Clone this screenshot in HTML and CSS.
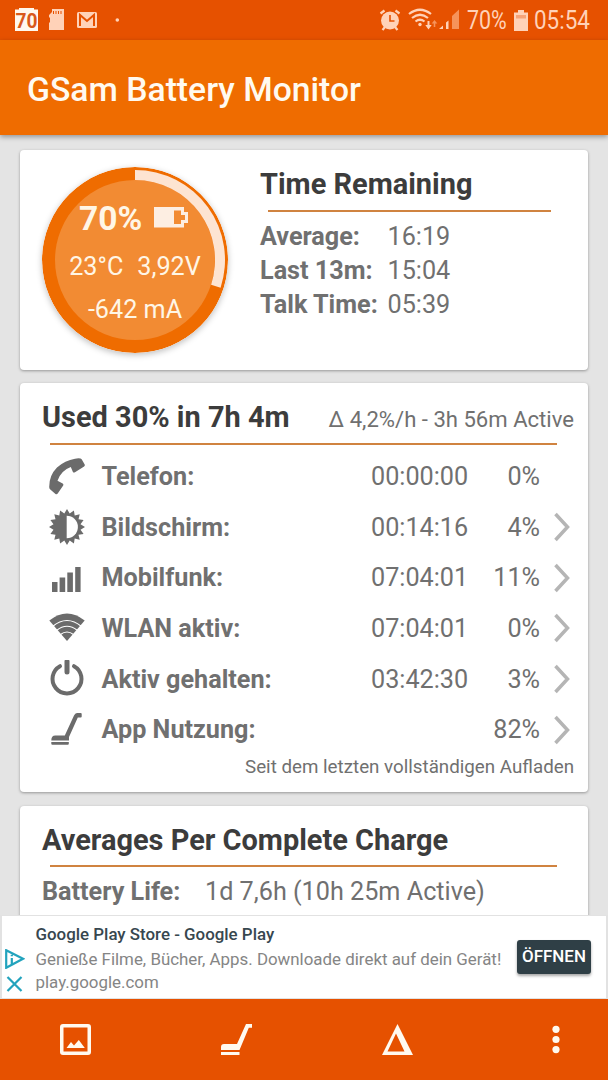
FILE: index.html
```html
<!DOCTYPE html>
<html lang="de">
<head>
  <meta charset="UTF-8">
  <meta name="viewport" content="width=device-width, initial-scale=1.0">
  <title>GSam Battery Monitor</title>
  <link rel="stylesheet" href="styles.css">
</head>
<body>
  <div class="status-bar">
    <svg class="status-left" width="130" height="40" viewBox="0 0 130 40">
      <path fill="#fff8ee" d="M19 8h15v1.500h4V31H15V9.500h4z"/>
      <text class="status-level" x="15.500" y="27.600" textLength="22" lengthAdjust="spacingAndGlyphs">70</text>
      <path fill="#ffd2b8" d="M52 9h12v21H49v-7l1-1v-4l-1-1v-2l3-3z"/>
      <path stroke="#e65100" stroke-width="1" d="M53.500 11v3M56 11v3M58.500 11v3M61 11v3"/>
      <rect x="77" y="12" width="20" height="16" rx="1.500" fill="#ffd2b8"/>
      <path fill="none" stroke="#e65100" stroke-width="2" d="M80 26V15l7 6 7-6v11"/>
      <circle cx="117.300" cy="20" r="1.800" fill="#ffd2b8"/>
    </svg>
    <svg class="status-right" width="82" height="40" viewBox="0 0 82 40">
      <circle cx="12" cy="20.500" r="9" fill="#ffd2b8"/>
      <path fill="none" stroke="#ffd2b8" stroke-width="2.200" d="M2.500 13.500l4-3M21.500 13.500l-4-3M7 27l-2.500 3M17 27l2.500 3"/>
      <path fill="none" stroke="#e65100" stroke-width="1.600" d="M12 15v6h4.500"/>
      <g fill="none" stroke="#ffd2b8" stroke-width="2.200">
        <path d="M31 14q11-8.500 22 0"/>
        <path d="M34 18q8-6.500 16 0"/>
        <path d="M37.500 21.500q4.500-3.500 9 0"/>
      </g>
      <circle cx="42" cy="24.500" r="1.700" fill="#ffd2b8"/>
      <path fill="#ffd2b8" d="M49.500 21h2v4h2.200l-3.200 4.500-3.200-4.500h2.200z"/>
      <path fill="#f6935a" d="M56.500 20l2.800 3.500h-2V27h-1.600v-3.500h-2z"/>
      <path fill="#ffd2b8" d="M61 29l4-3.500V29zM68 22.500l2.500-2V29H68z"/>
      <path fill="#f6935a" d="M74 16l7-6.500V29h-7z"/>
    </svg>
    <span class="status-percent">70%</span>
    <svg class="status-battery" width="14" height="21" viewBox="0 0 14 21">
      <path fill="#ffd2b8" d="M4 0h6v2.500h4V21H0V2.500h4z"/>
      <path fill="#f6a478" d="M2 5h10v3.500H2z"/>
    </svg>
    <span class="status-time">05:54</span>
  </div>

  <header class="app-bar">
    <h1>GSam Battery Monitor</h1>
  </header>

  <main class="content">
    <section class="card remaining">
      <div class="gauge">
        <svg class="gauge-ring" width="186" height="186" viewBox="-93 -93 186 186">
          <circle r="93" fill="#ef6c00"/>
          <circle r="80" fill="#f28b33"/>
          <path fill="#fde4d2" d="M0-90A90 90 0 0 1 85.600 27.800L76.100 24.700A80 80 0 0 0 0-80z"/>
        </svg>
        <div class="gauge-text">
          <div class="gauge-level">
            <b>70%</b>
            <svg width="35" height="22" viewBox="0 0 35 22">
              <path fill="#fdeee2" fill-rule="evenodd" d="M0 0h30v5h4v11h-4v4.500H0zM20 3.500V17h7v-4h4V8h-4V3.500z"/>
            </svg>
          </div>
          <div class="gauge-line"><span>23°C</span><span>3,92V</span></div>
          <div class="gauge-line">-642 mA</div>
        </div>
      </div>
      <div class="times">
        <h2>Time Remaining</h2>
        <hr>
        <dl>
          <dt>Average:</dt><dd>16:19</dd>
          <dt>Last 13m:</dt><dd>15:04</dd>
          <dt>Talk Time:</dt><dd>05:39</dd>
        </dl>
      </div>
    </section>

    <section class="card usage">
      <div class="card-head">
        <h2>Used 30% in 7h 4m</h2>
        <span>Δ 4,2%/h - 3h 56m Active</span>
      </div>
      <hr>
      <div class="row">
        <svg class="icon" viewBox="0 0 38 38"><path d="M27 .8Q30 0 32.500.5q1 .3 1.600 1.400l2.600 4.600q.6 1.200-.6 2L27 14.200q-1.500.9-2.200-.5l-2-4.700Q13 12.500 9.500 22.800l5.200 2.700q1.200.8.5 2L9.700 35.500q-.9 1.300-2.200.5L2.300 31.500Q1.200 30.500 1.200 29 1 17.500 9 9.500 17 2.500 27 .8z"/></svg>
        <b>Telefon:</b><span class="time">00:00:00</span><span class="percent">0%</span>
      </div>
      <div class="row">
        <svg class="icon" viewBox="-19 -19 38 38">
          <path d="M0-18L2.700-13.500 6.900-16.600 7.700-11.500 12.700-12.700 11.500-7.700 16.600-6.900 13.500-2.700 18 0 13.500 2.700 16.600 6.900 11.500 7.700 12.700 12.700 7.700 11.500 6.900 16.600 2.700 13.500 0 18-2.700 13.500-6.900 16.600-7.700 11.500-12.700 12.700-11.500 7.700-16.600 6.900-13.500 2.700-18 0-13.500-2.700-16.600-6.900-11.500-7.700-12.700-12.700-7.700-11.500-6.900-16.600-2.700-13.500z"/>
          <path fill="#fff" d="M-.3-11.200a11.200 11.200 0 0 1 0 22.400z"/>
        </svg>
        <b>Bildschirm:</b><span class="time">00:14:16</span><span class="percent">4%</span>
        <svg class="chevron" viewBox="0 0 16 30"><path d="M1.500 2l12 13-12 13"/></svg>
      </div>
      <div class="row">
        <svg class="icon" viewBox="0 0 38 38"><path d="M4 23h5.500v10H4zM11.600 18.500h5.600V33h-5.600zM19.300 13.500h5.600V33h-5.600zM27.200 8h5.400v25h-5.400z"/></svg>
        <b>Mobilfunk:</b><span class="time">07:04:01</span><span class="percent">11%</span>
        <svg class="chevron" viewBox="0 0 16 30"><path d="M1.500 2l12 13-12 13"/></svg>
      </div>
      <div class="row">
        <svg class="icon" viewBox="0 0 38 38">
          <path d="M19 32L1.300 11.500Q19-2.500 36.700 11.500z"/>
          <path class="gap" d="M4.500 17.500q14.500-12 29 0M8.500 21.500q10.500-8.500 21 0M12.500 25.500q6.500-5 13 0"/>
        </svg>
        <b>WLAN aktiv:</b><span class="time">07:04:01</span><span class="percent">0%</span>
        <svg class="chevron" viewBox="0 0 16 30"><path d="M1.500 2l12 13-12 13"/></svg>
      </div>
      <div class="row">
        <svg class="icon" viewBox="0 0 38 38"><path class="line" d="M12 6.200a14.500 14.500 0 1 0 14 0"/><path class="line thick" d="M19 1.500v10.500"/></svg>
        <b>Aktiv gehalten:</b><span class="time">03:42:30</span><span class="percent">3%</span>
        <svg class="chevron" viewBox="0 0 16 30"><path d="M1.500 2l12 13-12 13"/></svg>
      </div>
      <div class="row">
        <svg class="icon" viewBox="0 0 38 38"><path d="M33.700 3v2.500q0 1-1 1h-2.900L21 26v3.500H3.300q0-5 4-5h9.500L26 4.500Q27 2 29 2h3.700q1 0 1 1zM3.300 31h17.500v1.700q0 1-1 1H4.300q-1 0-1-1z"/></svg>
        <b>App Nutzung:</b><span class="time"></span><span class="percent">82%</span>
        <svg class="chevron" viewBox="0 0 16 30"><path d="M1.500 2l12 13-12 13"/></svg>
      </div>
      <p class="note">Seit dem letzten vollständigen Aufladen</p>
    </section>

    <section class="card averages">
      <h2>Averages Per Complete Charge</h2>
      <hr>
      <dl>
        <dt>Battery Life:</dt><dd>1d 7,6h (10h 25m Active)</dd>
      </dl>
    </section>
  </main>

  <aside class="ad">
    <div class="ad-marks">
      <svg width="20" height="20" viewBox="0 0 20 20"><path d="M1.200 1.200L18 9.800 1.200 18.800zM6.800 9v6M6.800 5.800v1.500"/></svg>
      <svg width="20" height="20" viewBox="0 0 20 20"><path d="M2.500 3l14 14M16.500 3l-14 14"/></svg>
    </div>
    <div class="ad-text">
      <strong>Google Play Store - Google Play</strong>
      <span>Genieße Filme, Bücher, Apps. Downloade direkt auf dein Gerät!</span>
      <span class="ad-url">play.google.com</span>
    </div>
    <button class="ad-button">ÖFFNEN</button>
  </aside>

  <nav class="bottom-bar">
    <svg width="31" height="31" viewBox="0 0 31 31"><path fill-rule="evenodd" d="M3 0h25q3 0 3 3v25q0 3-3 3H3q-3 0-3-3V3q0-3 3-3zM3.500 3.500v24h24v-24zM6.500 24l4.500-6 3 3.500 4.800-5.500 6 8z"/></svg>
    <svg width="31" height="31" viewBox="0 0 31 31"><path d="M25 0h6v3.700h-3.200L18.500 26H0v-3q0-3 3-3h13zM0 28h18.500v3H0z"/></svg>
    <svg width="31" height="31" viewBox="0 0 31 31"><path fill-rule="evenodd" d="M15.500 0L31 31H0zM14 9.500L5.500 27.500h17z"/></svg>
    <svg class="more" width="8" height="31" viewBox="0 0 8 31"><circle cx="4" cy="5.300" r="3.600"/><circle cx="4" cy="15.500" r="3.600"/><circle cx="4" cy="25.600" r="3.600"/></svg>
  </nav>
</body>
</html>
```
FILE: styles.css
```css
* {
  box-sizing: border-box;
}
body {
  font-family: Roboto, "Liberation Sans", sans-serif;
  font-size: 25.2px;
  margin: 0;
  height: 1080px;
  display: flex;
  flex-direction: column;
  background: #e4e4e4;
  color: #707070;
  overflow: hidden;
}
h1, h2, p, dl, dd {
  margin: 0;
}
svg {
  display: block;
  flex: none;
}

/* status bar */
.status-bar {
  height: 40px;
  flex: none;
  display: flex;
  align-items: center;
  background: #e65100;
  color: #ffd2b8;
  white-space: nowrap;
}
.status-level {
  font-size: 20px;
  font-weight: 700;
  fill: #d9591a;
}
.status-right {
  margin-left: 248px;
}
.status-percent {
  width: 40px;
  margin-left: 7px;
  font-size: 25.5px;
  transform: scaleX(0.84);
  transform-origin: left;
}
.status-battery {
  margin-left: 7px;
}
.status-time {
  margin-left: 6px;
  font-size: 25.5px;
  transform: scaleX(0.88);
  transform-origin: left;
}

.app-bar {
  height: 95px;
  flex: none;
  display: flex;
  align-items: center;
  padding: 3px 27px 0;
  background: #ef6c00;
  color: #fffaf0;
  box-shadow: 0 2px 5px rgba(0, 0, 0, 0.35);
  z-index: 1;
}
.app-bar h1 {
  font-size: 33.7px;
  font-weight: 500;
}

/* cards */
.content {
  height: 780px;
  flex: none;
  padding: 15px 20px 0;
  display: flex;
  flex-direction: column;
  gap: 13px;
  overflow: hidden;
}
.card {
  flex: none;
  background: #fff;
  border-radius: 4px;
  box-shadow: 0 1px 3px rgba(0, 0, 0, 0.35);
}
.card h2 {
  font-size: 28.95px;
  line-height: 34px;
  font-weight: 700;
  color: #3c3c3c;
  white-space: nowrap;
}
.card hr {
  height: 2px;
  margin: 0;
  border: 0;
  background: #d08340;
}
.card dl {
  display: grid;
  line-height: 34.2px;
  white-space: nowrap;
}
.card dt {
  font-weight: 700;
}
.remaining {
  height: 220px;
  display: flex;
  padding: 17px 14px 0 22px;
}
.gauge {
  position: relative;
  width: 186px;
  height: 186px;
}
.gauge-ring {
  border-radius: 50%;
  box-shadow: 0 2px 6px rgba(0, 0, 0, 0.25);
}
.gauge-text {
  position: absolute;
  inset: 0;
  padding-top: 30px;
  color: #fff6e6;
}
.gauge-level {
  height: 42px;
  margin-bottom: 6px;
  display: flex;
  align-items: center;
  gap: 12px;
  padding-left: 37px;
  font-size: 33.5px;
}
.gauge-line {
  height: 43px;
  display: flex;
  justify-content: center;
  align-items: center;
  gap: 14px;
}
.times {
  margin-left: 32px;
  flex: 1;
}
.times hr {
  width: 283px;
  margin: 9px 0 7.5px 8px;
}
.times dl {
  grid-template-columns: 127.5px 1fr;
}
.usage {
  height: 409px;
  margin-bottom: 1px;
  padding: 17px 14px 0 22px;
}
.card-head {
  display: flex;
  justify-content: space-between;
  align-items: baseline;
  font-size: 22.1px;
  white-space: nowrap;
}
.usage hr,
.averages hr {
  width: 507px;
  margin-left: 8px;
}
.usage hr {
  margin-top: 9px;
  margin-bottom: 6.4px;
}
.row {
  height: 50.6px;
  display: grid;
  grid-template-columns: 59.5px 1fr 97px 72px 34px;
  align-items: center;
  white-space: nowrap;
}
.icon {
  width: 38px;
  height: 38px;
  margin-left: 6px;
  fill: #6b6b6b;
}
.icon .gap {
  fill: none;
  stroke: #fff;
  stroke-width: 1.2;
}
.icon .line {
  fill: none;
  stroke: #6b6b6b;
  stroke-width: 4;
  stroke-linecap: round;
}
.icon .thick {
  stroke-width: 5;
}
.time,
.percent {
  text-align: right;
}
.chevron {
  width: 16px;
  height: 30px;
  margin-left: 14px;
  fill: none;
  stroke: #b5b5b5;
  stroke-width: 3.5;
}
.note {
  font-size: 18.75px;
  line-height: 24px;
  text-align: right;
}
.averages {
  height: 200px;
  padding: 16.5px 14px 0 22px;
}
.averages hr {
  margin-top: 8.5px;
  margin-bottom: 7.5px;
}
.averages dl {
  grid-template-columns: 163px 1fr;
}

/* ad banner */
.ad {
  height: 84px;
  flex: none;
  display: flex;
  border: 1px solid #e2e2e2;
  border-width: 1px 2px;
  background: #fff;
  z-index: 1;
}
.ad-marks {
  width: 33.5px;
  padding: 33px 0 0 3px;
}
.ad-marks svg {
  margin-bottom: 5px;
  fill: none;
  stroke: #22a3bd;
  stroke-width: 2.2;
}
.ad-text {
  width: 481.5px;
  padding-top: 7px;
  display: flex;
  flex-direction: column;
  font-size: 16.9px;
  line-height: 22.5px;
  color: #858585;
  white-space: nowrap;
}
.ad-text strong {
  font-weight: 500;
  color: #37474f;
  height: 25px;
}
.ad-button {
  width: 74px;
  height: 34px;
  margin-top: 24px;
  padding: 0 0 2px;
  border: 0;
  border-radius: 3px;
  background: #2f3f46;
  color: #fff;
  font: 500 16.9px Roboto, sans-serif;
  box-shadow: 0 2px 3px rgba(0, 0, 0, 0.35);
}

.bottom-bar {
  flex: 1;
  display: flex;
  align-items: center;
  gap: 130px;
  padding: 0 48px 0 60px;
  background: #e65100;
}
.bottom-bar svg {
  fill: #fffaf0;
}
.bottom-bar .more {
  margin-left: auto;
}
```
